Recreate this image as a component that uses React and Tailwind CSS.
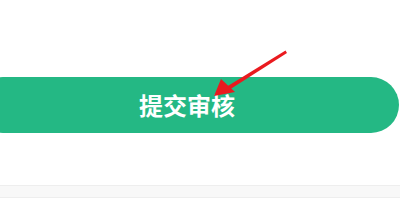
import React from "react";

export default function App() {
  return (
    <div className="relative w-[400px] h-[220px] bg-white overflow-hidden" style={{ fontFamily: '"Noto Sans CJK SC", "Noto Sans", sans-serif' }}>
      <div className="h-[77px]" />
      <div className="-ml-[25px] w-[424px] h-[56px] rounded-full bg-[#24b884] flex items-center justify-center">
        <span className="text-white text-[24px] font-bold leading-none">提交审核</span>
      </div>
      <div className="h-[52px]" />
      <div className="h-[13px] bg-[#f8f8f8] border-t border-b border-[#eeeeee]" />
      <svg className="absolute left-0 top-0" width="400" height="220" viewBox="0 0 400 220">
        <polygon points="285.5,50.5 287,53 229,90 227,86.5" fill="#ea1a1f" />
        <polygon points="214,96 221,79 235,92" fill="#ea1a1f" />
      </svg>
    </div>
  );
}
